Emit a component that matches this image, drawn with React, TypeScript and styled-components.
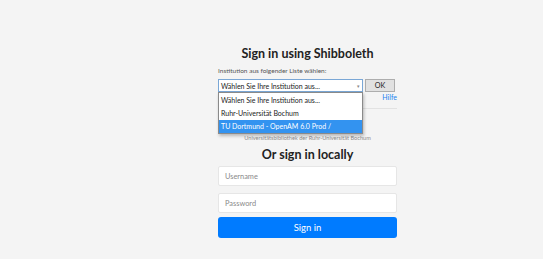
import styled, { createGlobalStyle } from 'styled-components';

const Global = createGlobalStyle`
    body{
        margin:0;
        background:#f4f4f4;
        font-family:Lato, "Noto Sans", sans-serif;
        color:#212529;
    }
`

const Page = styled.div`
    display:grid;
    grid-template-columns:218px 179px;
    padding-top:45px;
`

const Column = styled.div`
    grid-column:2;
    display:flex;
    flex-direction:column;
`

const Title = styled.h2`
    margin:0;
    text-align:center;
    font-size:12.5px;
    font-weight:700;
    line-height:18px;
    color:#222;
`

const Label = styled.div`
    margin-top:3px;
    font-size:6.5px;
    line-height:9px;
    color:#555;
`

const SelectRow = styled.div`
    display:flex;
    gap:2px;
    margin-top:4px;
`

const SelectWrap = styled.div`
    position:relative;
    width:145px;
`

const SelectBox = styled.div`
    height:11px;
    border:1px solid #7aa7d6;
    background:#fff;
    display:flex;
    align-items:center;
    justify-content:space-between;
    padding:0 2px;
    font-size:7px;
    color:#222;
`

const Caret = styled.span`
    font-size:5px;
    color:#888;
`

const Dropdown = styled.div`
    position:absolute;
    top:13px;
    left:0;
    width:145px;
    background:#fff;
    border:1px solid #8a8a8a;
    box-shadow:1px 2px 3px rgba(0,0,0,0.25);
    box-sizing:border-box;
    padding:1px 0 0 0;
`

const Option = styled.div<{ $active?: boolean }>`
    height:13px;
    line-height:13px;
    padding:0 2px;
    font-size:7px;
    color:${p => p.$active ? '#fff' : '#222'};
    background:${p => p.$active ? '#3393f0' : 'transparent'};
`

const OkButton = styled.button`
    width:30px;
    height:13px;
    padding:0;
    background:#e1e1e1;
    border:1px solid #adadad;
    font-family:inherit;
    font-size:7.2px;
    color:#222;
`

const HelpRow = styled.div`
    display:flex;
    justify-content:flex-end;
    margin-top:1px;
    font-size:7px;
    line-height:9px;
`

const Link = styled.a`
    color:#1a7ff0;
    text-decoration:none;
`

const Rule = styled.hr`
    margin:6px 0 0 0;
    border:0;
    border-top:1px solid #e2e2e2;
`

const Note = styled.div`
    margin-top:25px;
    text-align:center;
    font-size:5.6px;
    line-height:7px;
    color:#8c8c8c;
`

const SubTitle = styled(Title)`
    margin-top:5px;
`

const Input = styled.input`
    margin-top:2px;
    height:20px;
    box-sizing:border-box;
    border:1px solid #e6e6e6;
    border-radius:2px;
    background:#fff;
    padding:0 6px;
    font-family:inherit;
    font-size:7.4px;
    &::placeholder{ color:#8a8a8a; }
    & + &{ margin-top:7px; }
`

const Submit = styled.button`
    margin-top:4px;
    height:21px;
    border:0;
    border-radius:3px;
    background:#007bff;
    color:#fff;
    font-family:inherit;
    font-size:9.5px;
`

const options = [
    'Wählen Sie Ihre Institution aus...',
    'Ruhr-Universität Bochum',
    'TU Dortmund - OpenAM 6.0 Prod /',
]

export default function App() {
    return (
        <>
            <Global />
            <Page>
                <Column>
                    <Title>Sign in using Shibboleth</Title>
                    <Label>Institution aus folgender Liste wählen:</Label>
                    <SelectRow>
                        <SelectWrap>
                            <SelectBox>
                                <span>{options[0]}</span>
                                <Caret>▾</Caret>
                            </SelectBox>
                            <Dropdown>
                                {options.map((o, i) => (
                                    <Option key={o} $active={i === 2}>{o}</Option>
                                ))}
                            </Dropdown>
                        </SelectWrap>
                        <OkButton>OK</OkButton>
                    </SelectRow>
                    <HelpRow><Link href="#">Hilfe</Link></HelpRow>
                    <Rule />
                    <Note>Universitätsbibliothek der Ruhr-Universität Bochum</Note>
                    <SubTitle>Or sign in locally</SubTitle>
                    <Input placeholder="Username" />
                    <Input type="password" placeholder="Password" />
                    <Submit>Sign in</Submit>
                </Column>
            </Page>
        </>
    )
}
